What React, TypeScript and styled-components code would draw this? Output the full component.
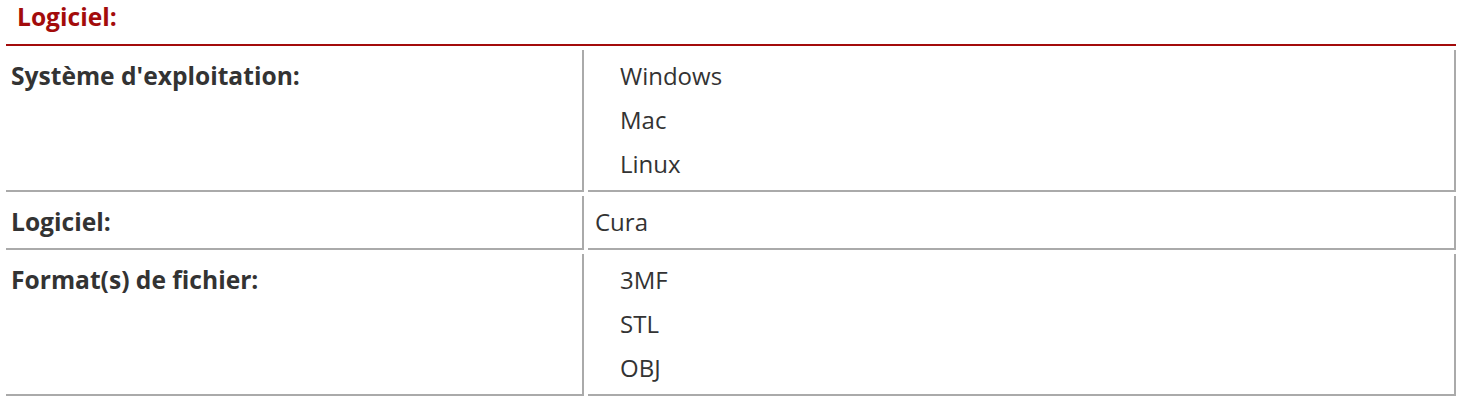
import React from "react";
import styled, { createGlobalStyle } from "styled-components";

const Global = createGlobalStyle`
  html, body { margin: 0; padding: 0; background: #fff; }
  body { font-family: "Open Sans", "Liberation Sans", sans-serif; color: #333; }
`;

const Page = styled.div`
  padding: 0 16px 0 6px;
  width: 1450px;
`;

const Heading = styled.h3`
  margin: 0;
  height: 46px;
  box-sizing: border-box;
  padding: 2px 0 0 11px;
  font-size: 24.6px;
  font-weight: 700;
  line-height: 30px;
  color: #a30b0b;
  border-bottom: 2px solid #a30b0b;
`;

const Table = styled.div`
  display: grid;
  grid-template-columns: 578px 868px;
  column-gap: 4px;
  row-gap: 4px;
  margin-top: 4px;
`;

const Cell = styled.div<{ $label?: boolean }>`
  box-sizing: border-box;
  border-right: 2px solid #aaa;
  border-bottom: 2px solid #aaa;
  padding: ${(p) => (p.$label ? "4px 6px 4px 5px" : "4px 6px 4px 7px")};
  font-size: ${(p) => (p.$label ? "24.6px" : "24px")};
  line-height: 44px;
  font-weight: ${(p) => (p.$label ? 700 : 400)};
  color: #333;
`;

const List = styled.ul`
  margin: 0;
  padding: 0 0 0 25px;
  list-style: none;
`;

const Item = styled.li`
  line-height: 44px;
`;

const rows: { label: string; values: string[]; list: boolean }[] = [
  { label: "Système d'exploitation:", values: ["Windows", "Mac", "Linux"], list: true },
  { label: "Logiciel:", values: ["Cura"], list: false },
  { label: "Format(s) de fichier:", values: ["3MF", "STL", "OBJ"], list: true },
];

export default function App() {
  return (
    <Page>
      <Global />
      <Heading>Logiciel:</Heading>
      <Table>
        {rows.map((r) => (
          <React.Fragment key={r.label}>
            <Cell $label>{r.label}</Cell>
            <Cell>
              {r.list ? (
                <List>
                  {r.values.map((v) => (
                    <Item key={v}>{v}</Item>
                  ))}
                </List>
              ) : (
                r.values[0]
              )}
            </Cell>
          </React.Fragment>
        ))}
      </Table>
    </Page>
  );
}
